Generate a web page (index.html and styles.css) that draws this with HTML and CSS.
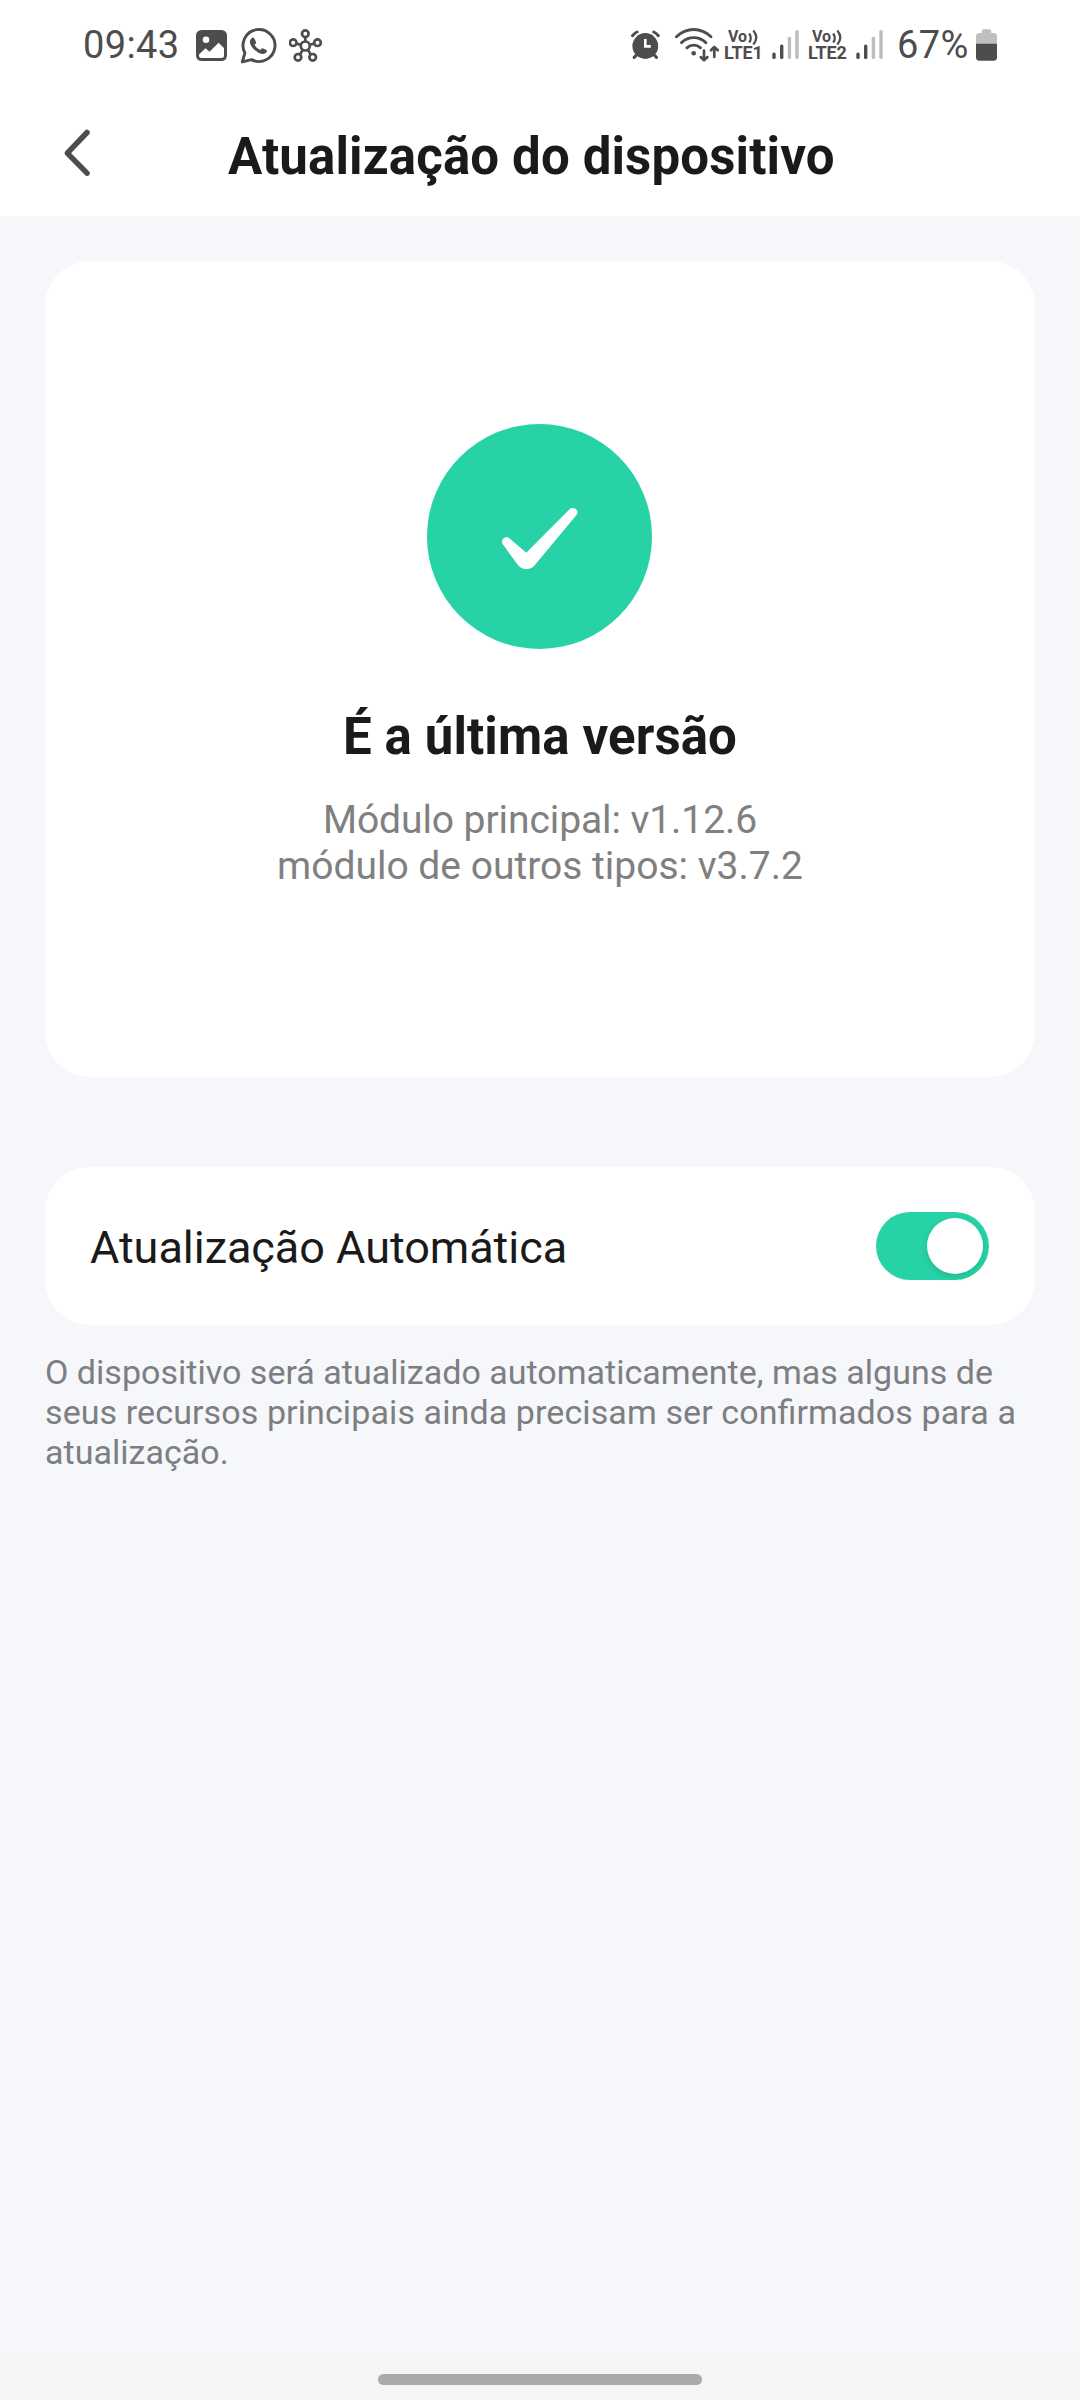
FILE: index.html
```html
<!DOCTYPE html>
<html lang="pt-BR">
<head>
<meta charset="utf-8">
<title>Atualização do dispositivo</title>
<link rel="stylesheet" href="styles.css">
</head>
<body>
<div class="screen">
  <div class="status">
    <span class="time">09:43</span>
    <svg class="ic-image" width="31" height="31" viewBox="0 0 31 31"><rect width="31" height="31" rx="5.5" fill="#4d4d4d"/><circle cx="10" cy="9.8" r="3.3" fill="#fff"/><path d="M3 24.500L9.500 18.200 13.500 21.800 22.500 12.800 28 18V25.500Q28 28 25.500 28H5.500Q3 28 3 25.500Z" fill="#fff"/></svg>
    <svg class="ic-whats" width="37" height="38" viewBox="0 0 37 38"><path d="M4.900 27A16 16 0 1 1 11.500 33.600L2.300 35.900Z" fill="none" stroke="#4d4d4d" stroke-width="2.900" stroke-linejoin="round"/><path d="M12.300 11.700Q13.800 11.300 14.600 12.900L16 16.100Q16.300 17.200 14.500 19.100Q16.500 22.500 20.200 24.100Q21.900 22 22.700 22.300L26.400 24Q27.200 24.500 26.600 26Q25.200 28.200 22.300 28Q18 27.300 14.400 23.800Q9.500 19 9.900 15.200Q10.200 12.900 12.300 11.700Z" fill="#4d4d4d"/></svg>
    <svg class="ic-hub" width="34" height="34" viewBox="0 0 34 34" fill="none" stroke="#4d4d4d" stroke-width="2.700"><circle cx="16.300" cy="17" r="4.500"/><circle cx="16.300" cy="4.700" r="3.300"/><circle cx="4.200" cy="13.700" r="3.300"/><circle cx="28.500" cy="13.700" r="3.300"/><circle cx="9" cy="28.300" r="3.300"/><circle cx="23.700" cy="28.300" r="3.300"/><path d="M16.300 8v4.500M7.500 14.600l4.400 1.200M25.200 14.600l-4.400 1.200M11 25.500l2.700-4.600M21.700 25.500l-2.700-4.600"/></svg>
    <svg class="ic-alarm" width="31" height="31" viewBox="0 0 31 31"><circle cx="15.300" cy="16" r="12.900" fill="#4d4d4d"/><path d="M2.500 5.700Q4.500 3.200 7 2M28.300 5.700Q26.300 3.200 23.800 2M4.200 27.400L7 24.500M26.500 27.400L23.700 24.500" stroke="#4d4d4d" stroke-width="3" stroke-linecap="round" fill="none"/><path d="M15.300 9v7.400h5.500" fill="none" stroke="#fff" stroke-width="2.600"/></svg>
    <svg class="ic-wifi" width="46" height="36" viewBox="0 0 46 36" fill="none" stroke="#4d4d4d" stroke-width="2.900" stroke-linecap="round" stroke-linejoin="round"><path d="M2.400 9.700Q10 2.500 19.700 2.500T37 9.700M7.500 15.600Q12.800 10.600 19.700 10.600T31.900 15.600M12.900 20.800Q15.900 18.100 19.700 18.100T26.500 20.800"/><path d="M30 23.500V33M26.700 30.100L30 33.200 33.500 30.100M40.300 30V20.500M37 23.200L40.300 20 43.800 23.200" stroke-width="2.700"/><circle cx="19.700" cy="26.300" r="2.300" fill="#4d4d4d" stroke="none"/></svg>
    <div class="volte">
      <div class="vo">Vo<svg width="11" height="17" viewBox="0 0 11 17" fill="none" stroke="#4d4d4d" stroke-width="2.200"><path d="M1.200 5.500Q4.400 10 1.200 14.500M5.300 2.500Q11.300 9.500 5.300 16.500"/></svg></div>
      <div class="lte">LTE1</div>
    </div>
    <svg class="ic-signal" width="29" height="31" viewBox="0 0 29 31" fill="#4d4d4d"><rect x="1.300" y="23.500" width="3.400" height="6.500" rx="1.500"/><rect x="9" y="15.500" width="3.400" height="14.500" rx="1.500"/><g fill="#bdbdbd"><rect x="16.700" y="7.700" width="3.400" height="22.300" rx="1.500"/><rect x="24.300" y="1" width="3.400" height="29" rx="1.500"/></g></svg>
    <div class="volte second">
      <div class="vo">Vo<svg width="11" height="17" viewBox="0 0 11 17" fill="none" stroke="#4d4d4d" stroke-width="2.200"><path d="M1.200 5.500Q4.400 10 1.200 14.500M5.300 2.500Q11.300 9.500 5.300 16.500"/></svg></div>
      <div class="lte">LTE2</div>
    </div>
    <svg class="ic-signal" width="29" height="31" viewBox="0 0 29 31" fill="#4d4d4d"><rect x="1.300" y="23.500" width="3.400" height="6.500" rx="1.500"/><rect x="9" y="15.500" width="3.400" height="14.500" rx="1.500"/><g fill="#bdbdbd"><rect x="16.700" y="7.700" width="3.400" height="22.300" rx="1.500"/><rect x="24.300" y="1" width="3.400" height="29" rx="1.500"/></g></svg>
    <span class="percent">67%</span>
    <svg class="ic-battery" width="21" height="32" viewBox="0 0 21 32"><path d="M5.700 4V2Q5.700 .3 7.400 .3H13.600Q15.300 .3 15.300 2V4H17.500Q21 4.300 21 7.500V15H0V7.500Q0 4.300 3.500 4Z" fill="#bfbfbf"/><path d="M0 14.700H21V28.200Q21 31.700 17.500 31.700H3.500Q0 31.700 0 28.200Z" fill="#4d4d4d"/></svg>
  </div>

  <header class="header">
    <svg class="back" width="30" height="52" viewBox="0 0 30 52"><path d="M25 6.500L5.300 27.100 25 47.200" fill="none" stroke="#4d4d4d" stroke-width="5.500" stroke-linecap="round" stroke-linejoin="round"/></svg>
    <h1 class="title">Atualização do dispositivo</h1>
  </header>

  <main class="content">
    <section class="card version">
      <svg class="badge" width="225" height="225" viewBox="0 0 225 225"><circle cx="112.500" cy="112.500" r="112.500" fill="#26d2a6"/><path d="M142.300 85.500C146 81.800 153 86 149.500 91L108.300 140.500C104.500 146.700 94 146.700 90.300 140.300L75.600 120C73 115.500 79 111 83 114.700L99.300 128.700Z" fill="#fff"/></svg>
      <h2 class="headline">É a última versão</h2>
      <p class="modules"><span class="module-main">Módulo principal: v1.12.6</span><br>módulo de outros tipos: v3.7.2</p>
    </section>
    <section class="card auto">
      <span class="label">Atualização Automática</span>
      <span class="toggle"><span class="knob"></span></span>
    </section>
    <p class="note">O dispositivo será atualizado automaticamente, mas alguns de<br><span class="note-wide">seus recursos principais ainda precisam ser con<span class="lig">fi</span>rmados para a</span><br>atualização.</p>
  </main>

  <footer class="nav"><div class="handle"></div></footer>
</div>
</body>
</html>
```
FILE: styles.css
```css
* { box-sizing: border-box; }
body, h1, h2, p { margin: 0; }
body { font-family: Roboto, "Liberation Sans", sans-serif; }
svg { display: block; flex: none; }

.screen {
  width: 1080px;
  height: 2400px;
  display: flex;
  flex-direction: column;
  background: #f5f7fb;
  overflow: hidden;
}

/* Status bar */
.status {
  flex: none;
  height: 96px;
  display: flex;
  align-items: flex-start;
  padding-left: 83px;
  background: #fff;
  color: #4d4d4d;
}
.time, .percent {
  flex: none;
  font-size: 38px;
  line-height: 46px;
  margin-top: 22px;
  letter-spacing: .4px;
  white-space: nowrap;
}
.time { width: 113px; }
.percent { width: 79px; margin-left: 13px; }
.ic-image { margin-top: 30px; }
.ic-whats { margin: 26px 0 0 13px; }
.ic-hub { margin: 29px 0 0 12px; }
.ic-alarm { margin: 30px 0 0 307px; }
.ic-wifi { margin: 27px 0 0 13px; }
.volte {
  flex: none;
  width: 38px;
  margin: 28px 0 0 4px;
  font-weight: 700;
  white-space: nowrap;
}
.second { margin-left: 8px; }
.vo { display: flex; align-items: center; gap: 1px; padding-left: 4px; height: 17px; font-size: 16px; }
.lte { font-size: 18px; line-height: 18px; margin-top: -1px; letter-spacing: -.2px; }
.ic-signal { margin: 29px 0 0 9px; }
.ic-battery { margin-top: 29px; }

/* Header */
.header {
  flex: none;
  height: 120px;
  display: flex;
  align-items: flex-start;
  padding: 30px 0 0 62px;
  background: #fff;
}
.title {
  margin: 1px 0 0 136px;
  font-size: 51px;
  line-height: 60px;
  font-weight: 700;
  letter-spacing: .13px;
  color: #1a1a1a;
  white-space: nowrap;
}

/* Cards */
.content { flex: 1; padding: 45px 45px 0; }
.card { background: #fff; border-radius: 45px; }
.version {
  height: 816px;
  padding-top: 163px;
  display: flex;
  flex-direction: column;
  align-items: center;
  text-align: center;
}
.badge { margin-right: 1px; }
.headline {
  margin-top: 58px;
  font-size: 51px;
  line-height: 60px;
  font-weight: 700;
  letter-spacing: .1px;
  color: #1a1a1a;
}
.modules {
  margin-top: 30px;
  font-size: 39px;
  line-height: 46px;
  color: #808080;
  white-space: nowrap;
}
.module-main { letter-spacing: -.08px; }
.auto {
  margin-top: 90px;
  height: 158px;
  display: flex;
  align-items: center;
  justify-content: space-between;
  padding: 0 46px 0 45px;
}
.label { padding-top: 3px; font-size: 45px; line-height: 54px; letter-spacing: -.04px; color: #1a1a1a; }
.toggle {
  width: 113px;
  height: 68px;
  border-radius: 34px;
  padding: 6px;
  display: flex;
  justify-content: flex-end;
  background: #26d2a6;
}
.knob {
  width: 56px;
  height: 56px;
  border-radius: 50%;
  background: #fff;
  box-shadow: 0 3px 6px rgba(0, 0, 0, .12);
}
.note {
  margin-top: 27px;
  font-size: 34px;
  line-height: 40px;
  letter-spacing: .02px;
  color: #7d7e80;
  white-space: nowrap;
}
.note-wide { letter-spacing: .1px; }
.lig { letter-spacing: 0; }

/* Gesture bar */
.nav {
  flex: none;
  height: 41px;
  padding-top: 15px;
  background: #f5f5f5;
}
.handle { width: 324px; height: 11px; margin: 0 auto; border-radius: 6px; background: #aaa; }
```
